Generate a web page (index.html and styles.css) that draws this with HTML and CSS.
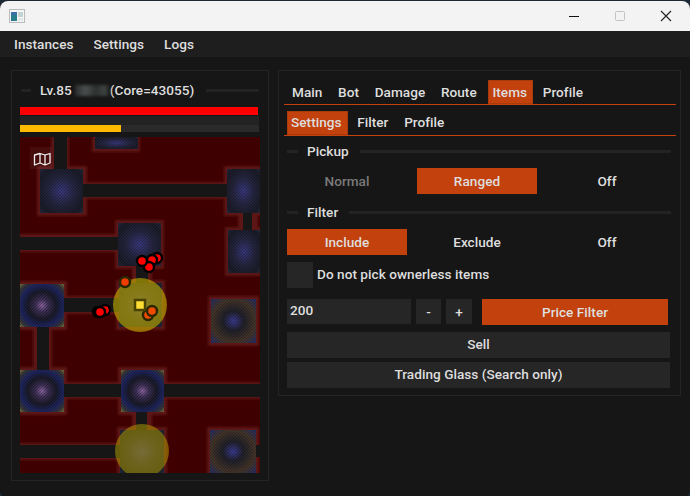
FILE: index.html
```html
<!DOCTYPE html>
<html lang="en">
<head>
<meta charset="utf-8">
<title>Instances</title>
<link rel="stylesheet" href="styles.css">
</head>
<body>
<div class="window">
  <header class="titlebar">
    <svg class="app-icon" width="16" height="14" viewBox="0 0 16 14">
      <rect x="0.5" y="0.5" width="15" height="13" fill="#f4f6f6" stroke="#b8bcbc"/>
      <rect x="2" y="3" width="6" height="9" fill="#2a7f8c"/>
      <rect x="2" y="3" width="6" height="3" fill="#3d6fa8"/>
      <rect x="9" y="3" width="5" height="5" fill="#c4d2d2"/>
      <rect x="9" y="9" width="5" height="3" fill="#e2e8e8"/>
    </svg>
    <div class="win-controls">
      <svg class="win-btn" width="12" height="12" viewBox="0 0 12 12"><path d="M1 6.5H11" stroke="#111" stroke-width="1"/></svg>
      <svg class="win-btn" width="12" height="12" viewBox="0 0 12 12"><rect x="1.5" y="1.5" width="9" height="9" rx="1" fill="none" stroke="#c4c4c4"/></svg>
      <svg class="win-btn" width="12" height="12" viewBox="0 0 12 12"><path d="M1 1L11 11M11 1L1 11" stroke="#222" stroke-width="1.1"/></svg>
    </div>
  </header>
  <nav class="menubar">
    <span>Instances</span><span>Settings</span><span>Logs</span>
  </nav>
  <main class="content">
    <section class="panel left">
      <div class="legend left-legend">
        <i class="rule short"></i>
        <span class="lv">Lv.85</span><span class="blurred"></span><span>(Core=43055)</span>
        <i class="rule long"></i>
      </div>
      <div class="bar hp"></div>
      <div class="bar gap"></div>
      <div class="bar exp"><div class="exp-fill"></div></div>
      <div class="map">
        <svg width="240" height="336" viewBox="20 137 240 336">
          <defs>
            <radialGradient id="blue" r="0.71">
              <stop offset="0" stop-color="#38387c"/>
              <stop offset="0.45" stop-color="#25253f"/>
              <stop offset="0.8" stop-color="#1a1c28"/>
              <stop offset="1" stop-color="#262840"/>
            </radialGradient>
            <radialGradient id="purple" r="0.71">
              <stop offset="0" stop-color="#8a64a0"/>
              <stop offset="0.2" stop-color="#3e3056"/>
              <stop offset="0.45" stop-color="#1a1a28"/>
              <stop offset="0.68" stop-color="#1e2560"/>
              <stop offset="0.85" stop-color="#35353a"/>
              <stop offset="1" stop-color="#85793c"/>
            </radialGradient>
            <radialGradient id="rust" r="0.71">
              <stop offset="0" stop-color="#3a3a90"/>
              <stop offset="0.32" stop-color="#20202a"/>
              <stop offset="0.68" stop-color="#443529"/>
              <stop offset="1" stop-color="#232c68"/>
            </radialGradient>
            <pattern id="grain" width="3" height="3" patternUnits="userSpaceOnUse">
              <path d="M0 3L3 0" stroke="#000" stroke-opacity=".28" stroke-width="1"/>
            </pattern>
            <clipPath id="room-clip">
              <rect x="95" y="137" width="43" height="12"/>
              <rect x="40" y="169" width="43" height="44"/>
              <rect x="227" y="169" width="33" height="44"/>
              <rect x="228" y="230" width="32" height="43"/>
              <rect x="118" y="223" width="43" height="43"/>
              <rect x="119" y="283" width="43" height="44"/>
              <rect x="20" y="284" width="44" height="43"/>
              <rect x="211" y="299" width="45" height="44"/>
              <rect x="20" y="370" width="44" height="42"/>
              <rect x="121" y="370" width="43" height="42"/>
              <rect x="120" y="430" width="44" height="43"/>
              <rect x="210" y="430" width="46" height="43"/>
            </clipPath>
            <filter id="soft" x="-5%" y="-5%" width="110%" height="110%"><feGaussianBlur stdDeviation="1"/></filter>
            <filter id="softer" x="-5%" y="-5%" width="110%" height="110%"><feGaussianBlur stdDeviation="0.5"/></filter>
          </defs>
          <rect x="20" y="137" width="240" height="336" fill="#3e0000"/>
          <g filter="url(#soft)">
            <g fill="#5c1418">
              <rect x="51" y="130" width="18" height="37"/>
              <rect x="86" y="182" width="138" height="17"/>
              <rect x="238" y="212" width="20" height="18"/>
              <rect x="10" y="234" width="106" height="18"/>
              <rect x="132" y="266" width="20" height="16"/>
              <rect x="66" y="296" width="50" height="18"/>
              <rect x="33" y="330" width="19" height="38"/>
              <rect x="66" y="382" width="54" height="17"/>
              <rect x="165" y="382" width="105" height="17"/>
              <rect x="132" y="414" width="20" height="14"/>
              <rect x="10" y="443" width="108" height="17"/>
              <rect x="92" y="130" width="48" height="22"/>
              <rect x="37" y="166" width="50" height="50"/>
              <rect x="224" y="166" width="46" height="50"/>
              <rect x="225" y="227" width="45" height="49"/>
              <rect x="115" y="220" width="49" height="49"/>
              <rect x="116" y="280" width="49" height="50"/>
              <rect x="10" y="281" width="57" height="49"/>
              <rect x="208" y="296" width="51" height="50"/>
              <rect x="10" y="367" width="57" height="48"/>
              <rect x="118" y="367" width="49" height="48"/>
              <rect x="117" y="427" width="50" height="56"/>
              <rect x="207" y="427" width="52" height="56"/>
            </g>
          </g>
          <g filter="url(#softer)">
            <g fill="#171413">
              <rect x="54" y="130" width="13" height="40"/>
              <rect x="83" y="184" width="144" height="13"/>
              <rect x="243" y="211" width="9" height="20"/>
              <rect x="10" y="237" width="110" height="13"/>
              <rect x="136" y="264" width="12" height="20"/>
              <rect x="62" y="298" width="58" height="14"/>
              <rect x="37" y="326" width="12" height="46"/>
              <rect x="62" y="384" width="60" height="13"/>
              <rect x="162" y="384" width="108" height="13"/>
              <rect x="136" y="410" width="11" height="22"/>
              <rect x="10" y="445" width="112" height="13"/>
              <rect x="254" y="445" width="16" height="12"/>
            </g>
          </g>
          <rect x="95" y="137" width="43" height="12" fill="url(#blue)"/>
          <rect x="40" y="169" width="43" height="44" fill="url(#blue)"/>
          <rect x="227" y="169" width="33" height="44" fill="url(#blue)"/>
          <rect x="228" y="230" width="32" height="43" fill="url(#blue)"/>
          <rect x="118" y="223" width="43" height="43" fill="url(#blue)"/>
          <rect x="119" y="283" width="43" height="44" fill="url(#blue)"/>
          <rect x="20" y="284" width="44" height="43" fill="url(#purple)"/>
          <rect x="211" y="299" width="45" height="44" fill="url(#rust)"/>
          <rect x="20" y="370" width="44" height="42" fill="url(#purple)"/>
          <rect x="121" y="370" width="43" height="42" fill="url(#purple)"/>
          <rect x="120" y="430" width="44" height="43" fill="url(#blue)"/>
          <rect x="210" y="430" width="46" height="43" fill="url(#rust)"/>
          <rect x="20" y="137" width="240" height="336" fill="url(#grain)" clip-path="url(#room-clip)"/>
          <circle cx="140" cy="305" r="27" fill="#c8b400" fill-opacity=".6"/>
          <circle cx="142" cy="451" r="27" fill="#b8a400" fill-opacity=".5"/>
          <g stroke="#2a2600" stroke-width="2.4">
            <circle cx="125" cy="282" r="5" fill="#f03c00"/>
            <circle cx="148" cy="315" r="5" fill="#f04a00"/>
            <circle cx="152" cy="311" r="5" fill="#f04a00"/>
          </g>
          <rect x="135" y="300" width="10" height="10" fill="#ffdd33" stroke="#4a4200" stroke-width="2.5"/>
          <g fill="#ff0000" stroke="#000" stroke-width="2.4">
            <circle cx="157" cy="258" r="5"/>
            <circle cx="152" cy="260" r="5"/>
            <circle cx="149" cy="267" r="5"/>
            <circle cx="142" cy="261" r="5"/>
            <circle cx="105" cy="310" r="5"/>
            <circle cx="98" cy="312" r="5"/>
            <circle cx="100" cy="312" r="5"/>
          </g>
          <rect x="30" y="147" width="22" height="22" fill="#fff" fill-opacity=".05"/>
          <path d="M34.5 155L40 153.5L45 155L50 153.5V163L45 165L40 163L34.5 165ZM40 153.5V163M45 155V165" fill="none" stroke="#f0f0f0" stroke-width="1.3" stroke-linejoin="round"/>
        </svg>
      </div>
    </section>
    <section class="panel right">
      <div class="tabs main-tabs">
        <span>Main</span><span>Bot</span><span>Damage</span><span>Route</span><span class="on">Items</span><span>Profile</span>
      </div>
      <div class="tabs sub-tabs">
        <span class="on">Settings</span><span>Filter</span><span>Profile</span>
      </div>
      <div class="legend sec"><i class="rule short"></i><span>Pickup</span><i class="rule"></i></div>
      <div class="seg">
        <button class="muted">Normal</button><button class="on">Ranged</button><button>Off</button>
      </div>
      <div class="legend sec"><i class="rule short"></i><span>Filter</span><i class="rule"></i></div>
      <div class="seg">
        <button class="on">Include</button><button>Exclude</button><button>Off</button>
      </div>
      <label class="check"><i class="box"></i><span>Do not pick ownerless items</span></label>
      <div class="price">
        <div class="input">200</div>
        <button class="step minus">-</button>
        <button class="step plus">+</button>
        <button class="on wide">Price Filter</button>
      </div>
      <button class="full first">Sell</button>
      <button class="full">Trading Glass (Search only)</button>
    </section>
  </main>
</div>
</body>
</html>
```
FILE: styles.css
```css
* { box-sizing: border-box; }
html, body { margin: 0; height: 100%; background: #1d2a36; }
body { font: 500 13.6px/16px Roboto, sans-serif; letter-spacing: 0.03px; color: #dedede; overflow: hidden; }
.window { width: 690px; height: 496px; margin-top: 1px; border-radius: 8px 8px 6px 6px; overflow: hidden; background: #161616; display: flex; flex-direction: column; }
.titlebar { height: 30px; background: #f3f3f3; display: flex; align-items: center; padding-left: 9px; flex: none; }
.app-icon { margin-top: -1px; }
.win-controls { margin-left: auto; display: flex; gap: 34px; padding-right: 18px; margin-top: -1px; }
.menubar { height: 26px; background: #1e1e1e; display: flex; gap: 20px; padding: 5px 0 0 14px; flex: none; }
.content { display: flex; align-items: flex-start; gap: 9px; padding: 13px 9px 0 11px; }
.panel { border: 1px solid #242424; background: #161616; }
.left { width: 258px; height: 411px; padding: 11px 0 0 8px; flex: none; }
.right { width: 403px; height: 326px; padding: 9px 8px 0 8px; flex: none; }
.legend { display: flex; align-items: center; }
.rule { flex: 1; height: 3px; background: #232323; }
.rule.short { flex: none; width: 11px; }
.left-legend { width: 238px; height: 16px; margin-left: 1px; }
.left-legend .short { width: 10px; }
.left-legend .long { margin-left: 12px; }
.left-legend .lv { margin-left: 9px; }
.blurred { width: 35px; height: 11px; margin: 0 0 0 3px; background: linear-gradient(90deg, #2a2e2e, #4a4e4e 30%, #2c302f 60%, #3f4342 85%, #1b1b1b); filter: blur(1.5px); }
.bar { width: 239px; }
.hp { height: 8px; margin-top: 9px; background: #ff0000; width: 238px; }
.gap { height: 9px; background: #232323; margin-top: 1px; }
.exp { height: 7px; background: #2a2a2a; }
.exp-fill { width: 101px; height: 7px; background: #ffb900; }
.map { margin-top: 5px; width: 240px; height: 336px; }
.map svg { display: block; }
.tabs { display: flex; border-bottom: 1px solid #c2410c; }
.tabs span { height: 24px; padding: 3px 6px 0 4px; margin-right: 5.7px; }
.tabs .on { background: #c2410c; box-shadow: inset 0 0 0 1px #a83a0c; }
.main-tabs { height: 25px; margin-left: -3px; width: 392px; padding-left: 4px; }
.main-tabs span { padding-top: 4px; }
.sub-tabs { height: 25px; margin: 6px 0 0 -3px; width: 392px; padding-left: 3px; }
.sec { margin: 7px 0 0 0; height: 16px; width: 384px; }
.sec span { margin: 0 11px 0 9px; }
.seg { display: flex; gap: 10px; margin-top: 9px; }
button { font: inherit; letter-spacing: inherit; color: inherit; border: 0; padding: 0; background: #262626; }
.seg button { width: 120px; height: 26px; background: none; }
.seg button.on, .wide.on { background: #c2410c; }
.seg button.muted { color: #7a7a7a; }
.sec + .seg + .sec { margin-top: 10px; }
.check { display: flex; align-items: center; gap: 4px; margin-top: 7px; }
.check span { padding-bottom: 2px; }
.box { width: 26px; height: 26px; background: #262626; }
.price { display: flex; align-items: flex-start; margin-top: 11px; }
.input { width: 124px; height: 25px; background: #262626; padding: 3px 0 0 3px; }
.step { height: 25px; }
.minus { width: 25px; margin-left: 5px; }
.plus { width: 26px; margin-left: 5px; }
.wide { width: 186px; height: 26px; margin-left: 10px; }
.full { display: block; width: 383px; height: 26px; margin-top: 4px; padding-bottom: 2px; }
.first { margin-top: 7px; }
```
